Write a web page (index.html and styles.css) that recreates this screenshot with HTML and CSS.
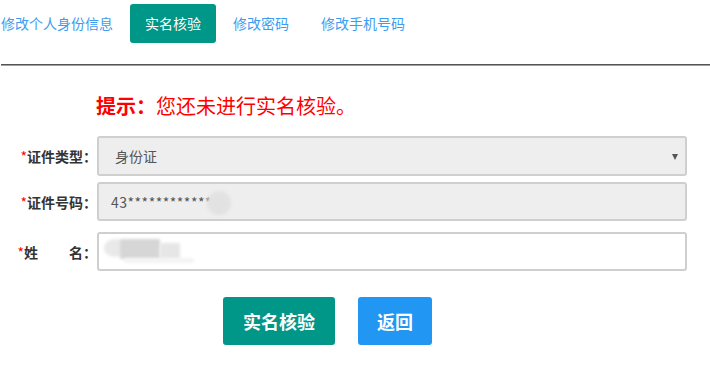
FILE: index.html
```html
<!DOCTYPE html>
<html lang="zh-CN">
<head>
<meta charset="utf-8">
<title>实名核验</title>
<link rel="stylesheet" href="styles.css">
</head>
<body>
<div class="tabs">
  <a class="tab">修改个人身份信息</a>
  <a class="tab active">实名核验</a>
  <a class="tab">修改密码</a>
  <a class="tab">修改手机号码</a>
</div>
<div class="divider"></div>
<div class="hint"><b>提示：</b>您还未进行实名核验。</div>
<form class="form">
  <div class="row">
    <label class="label"><span class="req">*</span>证件类型：</label>
    <div class="field select">身份证<span class="arrow"></span></div>
  </div>
  <div class="row">
    <label class="label"><span class="req">*</span>证件号码：</label>
    <div class="field readonly"><span class="idno">43**************</span><span class="blur blur-id"></span></div>
  </div>
  <div class="row row-name">
    <label class="label"><span class="req">*</span>姓<span class="gap"></span>名：</label>
    <div class="field plain">
      <span class="blur blur-a"></span><span class="blur blur-b"></span><span class="blur blur-c"></span><span class="blur blur-d"></span>
    </div>
  </div>
  <div class="actions">
    <button type="button" class="btn btn-teal">实名核验</button>
    <button type="button" class="btn btn-blue">返回</button>
  </div>
</form>
</body>
</html>
```

FILE: styles.css
```css
* { box-sizing: border-box; }
body {
  margin: 0;
  background: #fff;
  font-family: "Noto Sans CJK SC", "Liberation Sans", sans-serif;
  font-size: 14px;
  color: #333;
}
.tabs {
  display: flex;
  gap: 2px;
  padding-top: 4px;
  margin-left: -14px;
}
.tab {
  display: block;
  height: 39px;
  line-height: 39px;
  padding: 0 15px;
  color: #3d9cf0;
  font-size: 14px;
  border-radius: 3px;
}
.tab.active {
  background: #009688;
  color: #fff;
}
.divider {
  margin-top: 21px;
  margin-left: 1px;
  height: 2px;
  border-top: 1px solid #555;
  border-bottom: 1px solid #a0a0a0;
}
.hint {
  margin-top: 28px;
  padding-left: 96px;
  font-size: 20px;
  line-height: 24px;
  color: #f00;
}
.hint b { font-weight: bold; }
.form {
  margin-top: 18px;
}
.row {
  display: flex;
  align-items: center;
  margin-bottom: 6px;
}
.row-name { margin-top: 11px; }
.label {
  width: 97px;
  flex: none;
  text-align: right;
  font-weight: bold;
  color: #333;
  font-size: 14px;
}
.req { color: #f00; font-weight: normal; }
.gap {
  display: inline-block;
  width: 31px;
}
.field {
  position: relative;
  width: 590px;
  height: 40px;
  border: 2px solid #cfcfcf;
  border-radius: 3px;
  display: flex;
  align-items: center;
  color: #555;
  font-size: 14px;
}
.select {
  background: #eee;
  padding-left: 16px;
}
.readonly {
  height: 39px;
  background: #eee;
  padding-left: 12px;
}
.idno { letter-spacing: 0.5px; }
.plain {
  height: 39px;
  background: #fff;
}
.arrow {
  position: absolute;
  right: 7px;
  top: 16px;
  width: 0;
  height: 0;
  border-left: 3px solid transparent;
  border-right: 3px solid transparent;
  border-top: 6px solid #555;
}
.blur {
  position: absolute;
  display: block;
  filter: blur(1.5px);
}
.blur-id {
  left: 108px;
  top: 7px;
  width: 24px;
  height: 24px;
  border-radius: 50%;
  background: #e2e2e2;
}
.blur-a {
  left: 5px;
  top: 5px;
  width: 22px;
  height: 18px;
  border-radius: 50%;
  background: #e9e9e9;
}
.blur-b {
  left: 21px;
  top: 5px;
  width: 40px;
  height: 20px;
  background: #d6d6d6;
}
.blur-c {
  left: 61px;
  top: 9px;
  width: 20px;
  height: 16px;
  background: #e6e6e6;
}
.blur-d {
  left: 25px;
  top: 24px;
  width: 70px;
  height: 5px;
  border-radius: 3px;
  background: #f3f3f3;
}
.actions {
  display: flex;
  gap: 23px;
  margin-top: 26px;
  padding-left: 223px;
}
.btn {
  height: 48px;
  border: none;
  border-radius: 3px;
  color: #fff;
  font-family: "Noto Sans CJK SC", "Liberation Sans", sans-serif;
  font-size: 18px;
  font-weight: bold;
  padding: 0;
  cursor: pointer;
}
.btn-teal { background: #009688; width: 112px; }
.btn-blue { background: #2196f3; width: 74px; }
```
